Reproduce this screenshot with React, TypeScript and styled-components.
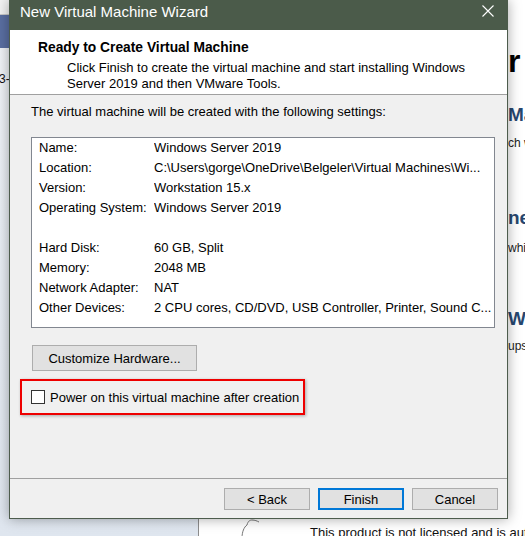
import React from "react";
import styled, { createGlobalStyle } from "styled-components";

const GlobalStyle = createGlobalStyle`
  html, body {
    margin: 0;
    padding: 0;
  }
  body {
    font-family: "Liberation Sans", Arial, sans-serif;
    font-size: 13px;
    color: #000;
  }
`;

type Setting = { label: string; value: string } | null;

const settings: Setting[] = [
  { label: "Name:", value: "Windows Server 2019" },
  {
    label: "Location:",
    value: "C:\\Users\\gorge\\OneDrive\\Belgeler\\Virtual Machines\\Wi...",
  },
  { label: "Version:", value: "Workstation 15.x" },
  { label: "Operating System:", value: "Windows Server 2019" },
  null,
  { label: "Hard Disk:", value: "60 GB, Split" },
  { label: "Memory:", value: "2048 MB" },
  { label: "Network Adapter:", value: "NAT" },
  {
    label: "Other Devices:",
    value: "2 CPU cores, CD/DVD, USB Controller, Printer, Sound C...",
  },
];

// what peeks out from the app window behind the dialog
const peeks = [
  { text: "r", size: 32, gap: 45, heading: true, tone: "#000" },
  { text: "Ma", size: 19, gap: 28, heading: true, tone: "#27476f" },
  { text: "ch w", size: 12, gap: 13, heading: false, tone: "#222" },
  { text: "ne", size: 19, gap: 59, heading: true, tone: "#27476f" },
  { text: "whi", size: 12, gap: 15, heading: false, tone: "#222" },
  { text: "Wo", size: 19, gap: 55, heading: true, tone: "#27476f" },
  { text: "ups", size: 12, gap: 12, heading: false, tone: "#222" },
];

const CloseIcon = () => (
  <svg width="12" height="12" viewBox="0 0 12 12">
    <path d="M0.5 0.5 L11.5 11.5 M11.5 0.5 L0.5 11.5" stroke="#fff" strokeWidth="1.1" />
  </svg>
);

const LicenseIcon = () => (
  <svg width="24" height="20" viewBox="0 0 24 20">
    <path
      d="M2 20 C2 14 4 9 7 7 C8 3 10 2 12 2 C15 2 17 3 19 4"
      fill="none"
      stroke="#777"
      strokeWidth="1"
    />
  </svg>
);

export default function App() {
  return (
    <Desktop>
      <GlobalStyle />
      <LibraryPane>
        <LibraryToolbar />
        <LibraryBand />
        <LibraryItem>3-</LibraryItem>
      </LibraryPane>

      <HomePane>
        {peeks.map((p) => (
          <Peek key={p.text} size={p.size} gap={p.gap} heading={p.heading} tone={p.tone}>
            {p.text}
          </Peek>
        ))}
        <LicenseRow>
          <LicenseIcon />
          <LicenseText>This product is not licensed and is authorized for non-commercial use only.</LicenseText>
        </LicenseRow>
      </HomePane>

      <Dialog>
        <TitleBar>
          <TitleText>New Virtual Machine Wizard</TitleText>
          <CloseButton>
            <CloseIcon />
          </CloseButton>
        </TitleBar>

        <Header>
          <HeaderTitle>Ready to Create Virtual Machine</HeaderTitle>
          <HeaderDesc>
            Click Finish to create the virtual machine and start installing Windows
            <br />
            Server 2019 and then VMware Tools.
          </HeaderDesc>
        </Header>

        <Body>
          <Intro>The virtual machine will be created with the following settings:</Intro>
          <SettingsList>
            {settings.map((s, i) =>
              s ? (
                <SettingRow key={s.label}>
                  <span>{s.label}</span>
                  <SettingValue>{s.value}</SettingValue>
                </SettingRow>
              ) : (
                <SettingRow key={`gap-${i}`} />
              )
            )}
          </SettingsList>

          <CustomizeButton>Customize Hardware...</CustomizeButton>

          <PowerOption>
            <Checkbox />
            <PowerLabel>Power on this virtual machine after creation</PowerLabel>
          </PowerOption>
        </Body>

        <Footer>
          <WizardButton>&lt; Back</WizardButton>
          <WizardButton primary>Finish</WizardButton>
          <WizardButton>Cancel</WizardButton>
        </Footer>
      </Dialog>
    </Desktop>
  );
}

// Styled Components
const Desktop = styled.div`
  position: relative;
  width: 525px;
  height: 536px;
  overflow: hidden;
  display: grid;
  grid-template-columns: 198px 1fr;
  background: #fff;
`;

const LibraryPane = styled.div`
  display: flex;
  flex-direction: column;
  background: linear-gradient(#f2f4f7 0%, #e9eef4 40%, #dfe6ef 100%);
`;

const LibraryToolbar = styled.div`
  height: 14px;
  background: #f3f3f3;
  border-bottom: 1px solid #c9c9c9;
`;

const LibraryBand = styled.div`
  height: 33px;
  background: #5a6fa2;
`;

const LibraryItem = styled.div`
  margin: 24px 0 0 -1px;
  font-size: 12px;
  line-height: 14px;
  color: #111;
`;

const HomePane = styled.div`
  display: flex;
  flex-direction: column;
  border-left: 1px solid #8c8c8c;
  padding-left: 309px;
  white-space: nowrap;
`;

const Peek = styled.div<{ size: number; gap: number; heading: boolean; tone: string }>`
  margin-top: ${({ gap }) => gap}px;
  font-size: ${({ size }) => size}px;
  line-height: 1;
  font-weight: ${({ heading }) => (heading ? 700 : 400)};
  color: ${({ tone }) => tone};
`;

const LicenseRow = styled.div`
  margin: auto 0 -10px -268px;
  height: 28px;
  display: flex;
  align-items: flex-start;
  gap: 46px;
`;

const LicenseText = styled.span`
  padding-top: 8px;
  font-size: 13px;
  line-height: 14px;
  color: #111;
`;

const Dialog = styled.div`
  position: absolute;
  left: 9px;
  top: 0;
  width: 499px;
  height: 519px;
  box-sizing: border-box;
  display: flex;
  flex-direction: column;
  border: 1px solid #4d5c4d;
  border-top: none;
  background: #f0f0f0;
  box-shadow: 0 0 12px rgba(0, 0, 0, 0.35);
`;

const TitleBar = styled.div`
  height: 30px;
  display: flex;
  justify-content: space-between;
  align-items: flex-start;
  margin: 0 -1px;
  background: #4b5b4a;
  color: #fff;
`;

const TitleText = styled.span`
  padding: 4px 0 0 11px;
  font-size: 15px;
  line-height: 15px;
`;

const CloseButton = styled.div`
  width: 41px;
  padding-top: 5px;
  display: flex;
  justify-content: center;
`;

const Header = styled.div`
  height: 64px;
  box-sizing: content-box;
  padding-left: 28px;
  background: #fff;
  border-bottom: 1px solid #a0a0a0;
`;

const HeaderTitle = styled.div`
  padding-top: 10px;
  font-size: 13.8px;
  font-weight: 700;
  line-height: 15px;
`;

const HeaderDesc = styled.div`
  margin: 5px 0 0 29px;
  line-height: 16px;
`;

const Body = styled.div`
  flex: 1;
  display: flex;
  flex-direction: column;
  align-items: flex-start;
  padding: 9px 12px 0 21px;
`;

const Intro = styled.div`
  line-height: 16px;
`;

const SettingsList = styled.div`
  align-self: stretch;
  margin-top: 17px;
  height: 191px;
  box-sizing: border-box;
  padding-left: 7px;
  background: #fff;
  border: 1px solid #828790;
  overflow: hidden;
`;

const SettingRow = styled.div`
  height: 20px;
  display: grid;
  grid-template-columns: 115px 1fr;
  line-height: 20px;
  white-space: nowrap;
`;

const SettingValue = styled.span`
  overflow: hidden;
`;

const CustomizeButton = styled.div`
  margin: 17px 0 0 1px;
  width: 165px;
  height: 26px;
  box-sizing: border-box;
  display: flex;
  align-items: center;
  justify-content: center;
  background: #e1e1e1;
  border: 1px solid #adadad;
`;

const PowerOption = styled.div`
  margin: 8px 0 0 -11px;
  width: 285px;
  height: 36px;
  box-sizing: border-box;
  display: flex;
  align-items: center;
  padding: 1px 0 0 9px;
  border: 2px solid #ee0000;
  box-shadow: 1px 1px 3px rgba(0, 0, 0, 0.3);
`;

const Checkbox = styled.span`
  width: 14px;
  height: 14px;
  box-sizing: border-box;
  margin-top: -1px;
  background: #fff;
  border: 1px solid #333;
`;

const PowerLabel = styled.span`
  margin-left: 5px;
  line-height: 15px;
  white-space: nowrap;
`;

const Footer = styled.div`
  height: 40px;
  box-sizing: border-box;
  display: flex;
  justify-content: flex-end;
  align-items: flex-start;
  gap: 8px;
  padding: 9px 9px 0 0;
  border-top: 1px solid #a0a0a0;
`;

const WizardButton = styled.div<{ primary?: boolean }>`
  width: 86px;
  height: 22px;
  box-sizing: border-box;
  display: flex;
  align-items: center;
  justify-content: center;
  background: #e1e1e1;
  border: ${({ primary }) => (primary ? "2px solid #0078d7" : "1px solid #adadad")};
`;
